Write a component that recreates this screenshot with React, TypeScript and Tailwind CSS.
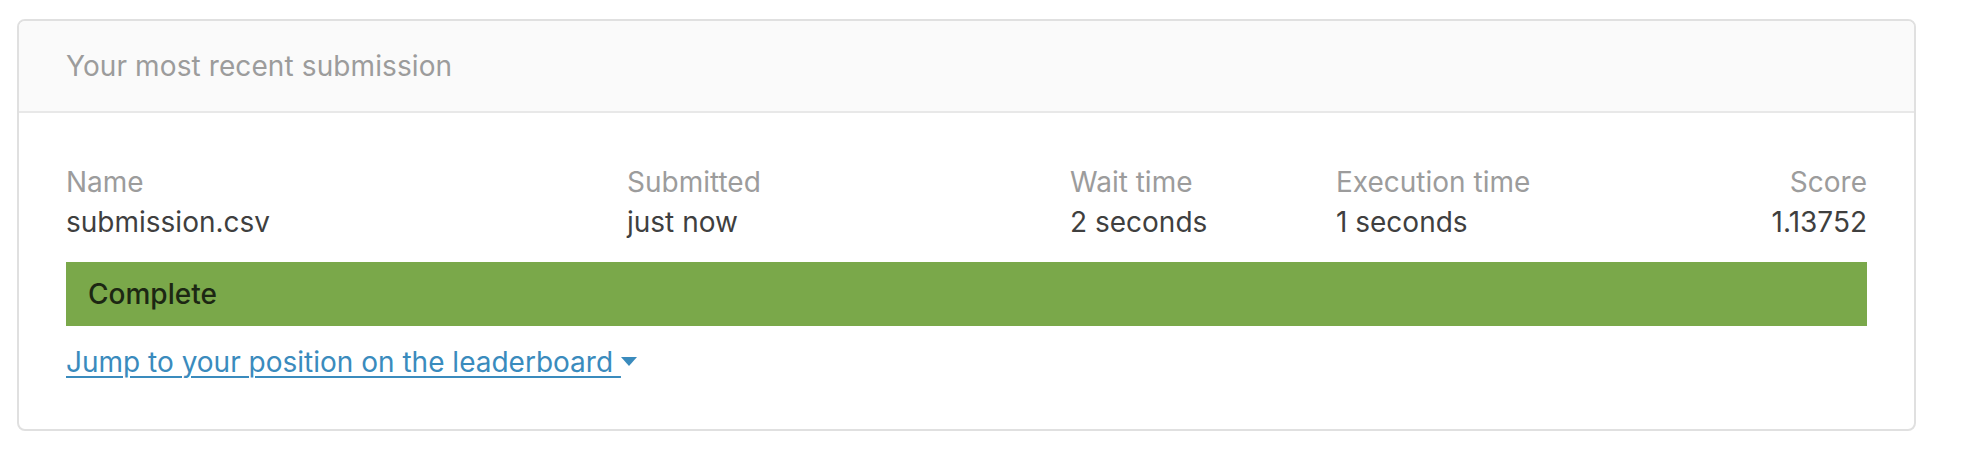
import React from "react";

export default function App() {
  return (
    <div className="min-h-[452px] bg-white pt-[19px] pl-[17px]" style={{ fontFamily: "Inter, 'Liberation Sans', sans-serif" }}>
      <div className="w-[1899px] rounded-[8px] border-2 border-[#e0e0e0] overflow-hidden">
        <div className="bg-[#fafafa] border-b-2 border-[#e8e8e8] px-[47px] py-[25px] text-[28px] leading-[40px] text-[#9c9c9c] tracking-[0.1px]">
          Your most recent submission
        </div>
        <div className="px-[47px] pt-[49px] pb-[47px]">
          <div className="grid grid-cols-[561px_443px_266px_1fr_auto] text-[28px] leading-[40px]">
            <div>
              <div className="text-[#9c9c9c]">Name</div>
              <div className="text-[#3f3f3f]">submission.csv</div>
            </div>
            <div>
              <div className="text-[#9c9c9c]">Submitted</div>
              <div className="text-[#3f3f3f]">just now</div>
            </div>
            <div>
              <div className="text-[#9c9c9c]">Wait time</div>
              <div className="text-[#3f3f3f]">2 seconds</div>
            </div>
            <div>
              <div className="text-[#9c9c9c]">Execution time</div>
              <div className="text-[#3f3f3f]">1 seconds</div>
            </div>
            <div className="text-right">
              <div className="text-[#9c9c9c]">Score</div>
              <div className="text-[#3f3f3f]">1.13752</div>
            </div>
          </div>
          <div className="mt-[20px] bg-[#7aa84a] px-[22px] py-[12px] text-[28px] leading-[40px] font-medium text-[#1c2713]">
            Complete
          </div>
          <div className="mt-[16px] flex items-center text-[28px] leading-[40px] text-[#3a8bbd]">
            <span className="underline decoration-[2px] underline-offset-[4px]">Jump to your position on the leaderboard&nbsp;</span>
            <svg width="16" height="9" viewBox="0 0 16 9" className="ml-[0px] mt-[-2px]">
              <path d="M0 0 L16 0 L8 9 Z" fill="#3a8bbd" />
            </svg>
          </div>
        </div>
      </div>
    </div>
  );
}
